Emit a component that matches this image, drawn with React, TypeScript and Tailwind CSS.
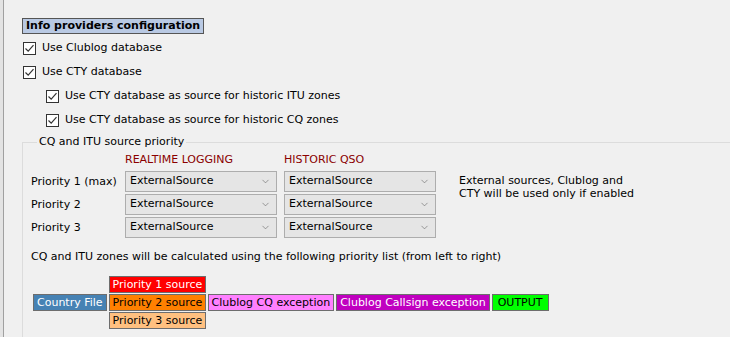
import { ChevronDown } from 'lucide-react';

const font = { fontFamily: '"DejaVu Sans", sans-serif' };

function Check({ label }: { label: string }) {
    return (
        <label className="flex h-[24px] items-center gap-[6px]">
            <span className="flex h-[13px] w-[13px] items-center justify-center border border-[#333333] bg-white">
                <svg width="11" height="11" viewBox="0 0 11 11">
                    <path d="M1.5 5.5 L4.2 8.2 L9.5 2.2" fill="none" stroke="#333333" strokeWidth="1.2" />
                </svg>
            </span>
            <span>{label}</span>
        </label>
    );
}

function Combo() {
    return (
        <div className="flex h-[21px] w-[152px] items-center justify-between border border-[#adadad] bg-[#e5e5e5] pl-[4px] pr-[5px]">
            <span>ExternalSource</span>
            <ChevronDown className="h-[11px] w-[11px] text-[#606060]" strokeWidth={1.3} />
        </div>
    );
}

const chip = 'flex h-[17px] items-center whitespace-nowrap border border-[#6d6d6d] px-[3px] leading-none';

export default function App() {
    const rows = ['Priority 1 (max)', 'Priority 2', 'Priority 3'];

    return (
        <div className="flex h-[337px] w-[730px] overflow-hidden bg-[#f0f0f0] text-[11px] text-black" style={font}>
            <div className="w-[3px] bg-[#e3e3e3]" />
            <div className="w-[1px] bg-[#a0a0a0]" />

            <div className="flex flex-1 flex-col pl-[18px] pt-[18px]">
                <div className="self-start border border-[#555555] bg-[#b9c9e3] px-[3px] text-[11px] font-bold leading-[14px]">
                    Info providers configuration
                </div>

                <div className="mt-[2px] flex flex-col pl-[1px]">
                    <Check label="Use Clublog database" />
                    <Check label="Use CTY database" />
                    <div className="flex flex-col pl-[23px]">
                        <Check label="Use CTY database as source for historic ITU zones" />
                        <Check label="Use CTY database as source for historic CQ zones" />
                    </div>
                </div>

                <fieldset className="mt-[3px] flex-1 border-l border-t border-[#dcdcdc] pl-[8px]">
                    <legend className="ml-[6px] px-[2px] leading-[14px]">CQ and ITU source priority</legend>

                    <div className="flex pt-[3px]">
                        <div className="flex w-[94px] flex-col pt-[19px]">
                            {rows.map(r => (
                                <div key={r} className="flex h-[23px] items-center">{r}</div>
                            ))}
                        </div>
                        <div className="flex flex-col gap-[2px]">
                            <div className="h-[17px] leading-[15px] text-[#8b0000]">REALTIME LOGGING</div>
                            <Combo />
                            <Combo />
                            <Combo />
                        </div>
                        <div className="ml-[7px] flex flex-col gap-[2px]">
                            <div className="h-[17px] leading-[15px] text-[#8b0000]">HISTORIC QSO</div>
                            <Combo />
                            <Combo />
                            <Combo />
                        </div>
                        <div className="ml-[23px] pt-[22px] leading-[13px]">
                            External sources, Clublog and<br />CTY will be used only if enabled
                        </div>
                    </div>

                    <div className="mt-[9px]">
                        CQ and ITU zones will be calculated using the following priority list (from left to right)
                    </div>

                    <div className="mt-[10px] flex items-center gap-[2px] pl-[2px]">
                        <div className={`${chip} bg-[#4682b4] text-white`}>Country File</div>
                        <div className="flex w-[97px] flex-col gap-[1px]">
                            <div className={`${chip} bg-[#ff0000] text-white`}>Priority 1 source</div>
                            <div className={`${chip} bg-[#ff8000]`}>Priority 2 source</div>
                            <div className={`${chip} bg-[#ffc080]`}>Priority 3 source</div>
                        </div>
                        <div className={`${chip} bg-[#ff80ff]`}>Clublog CQ exception</div>
                        <div className={`${chip} bg-[#c000c0] px-[2px] text-white`}>Clublog Callsign exception</div>
                        <div className={`${chip} bg-[#00ff00] px-[5px]`}>OUTPUT</div>
                    </div>
                </fieldset>
            </div>
        </div>
    );
}
